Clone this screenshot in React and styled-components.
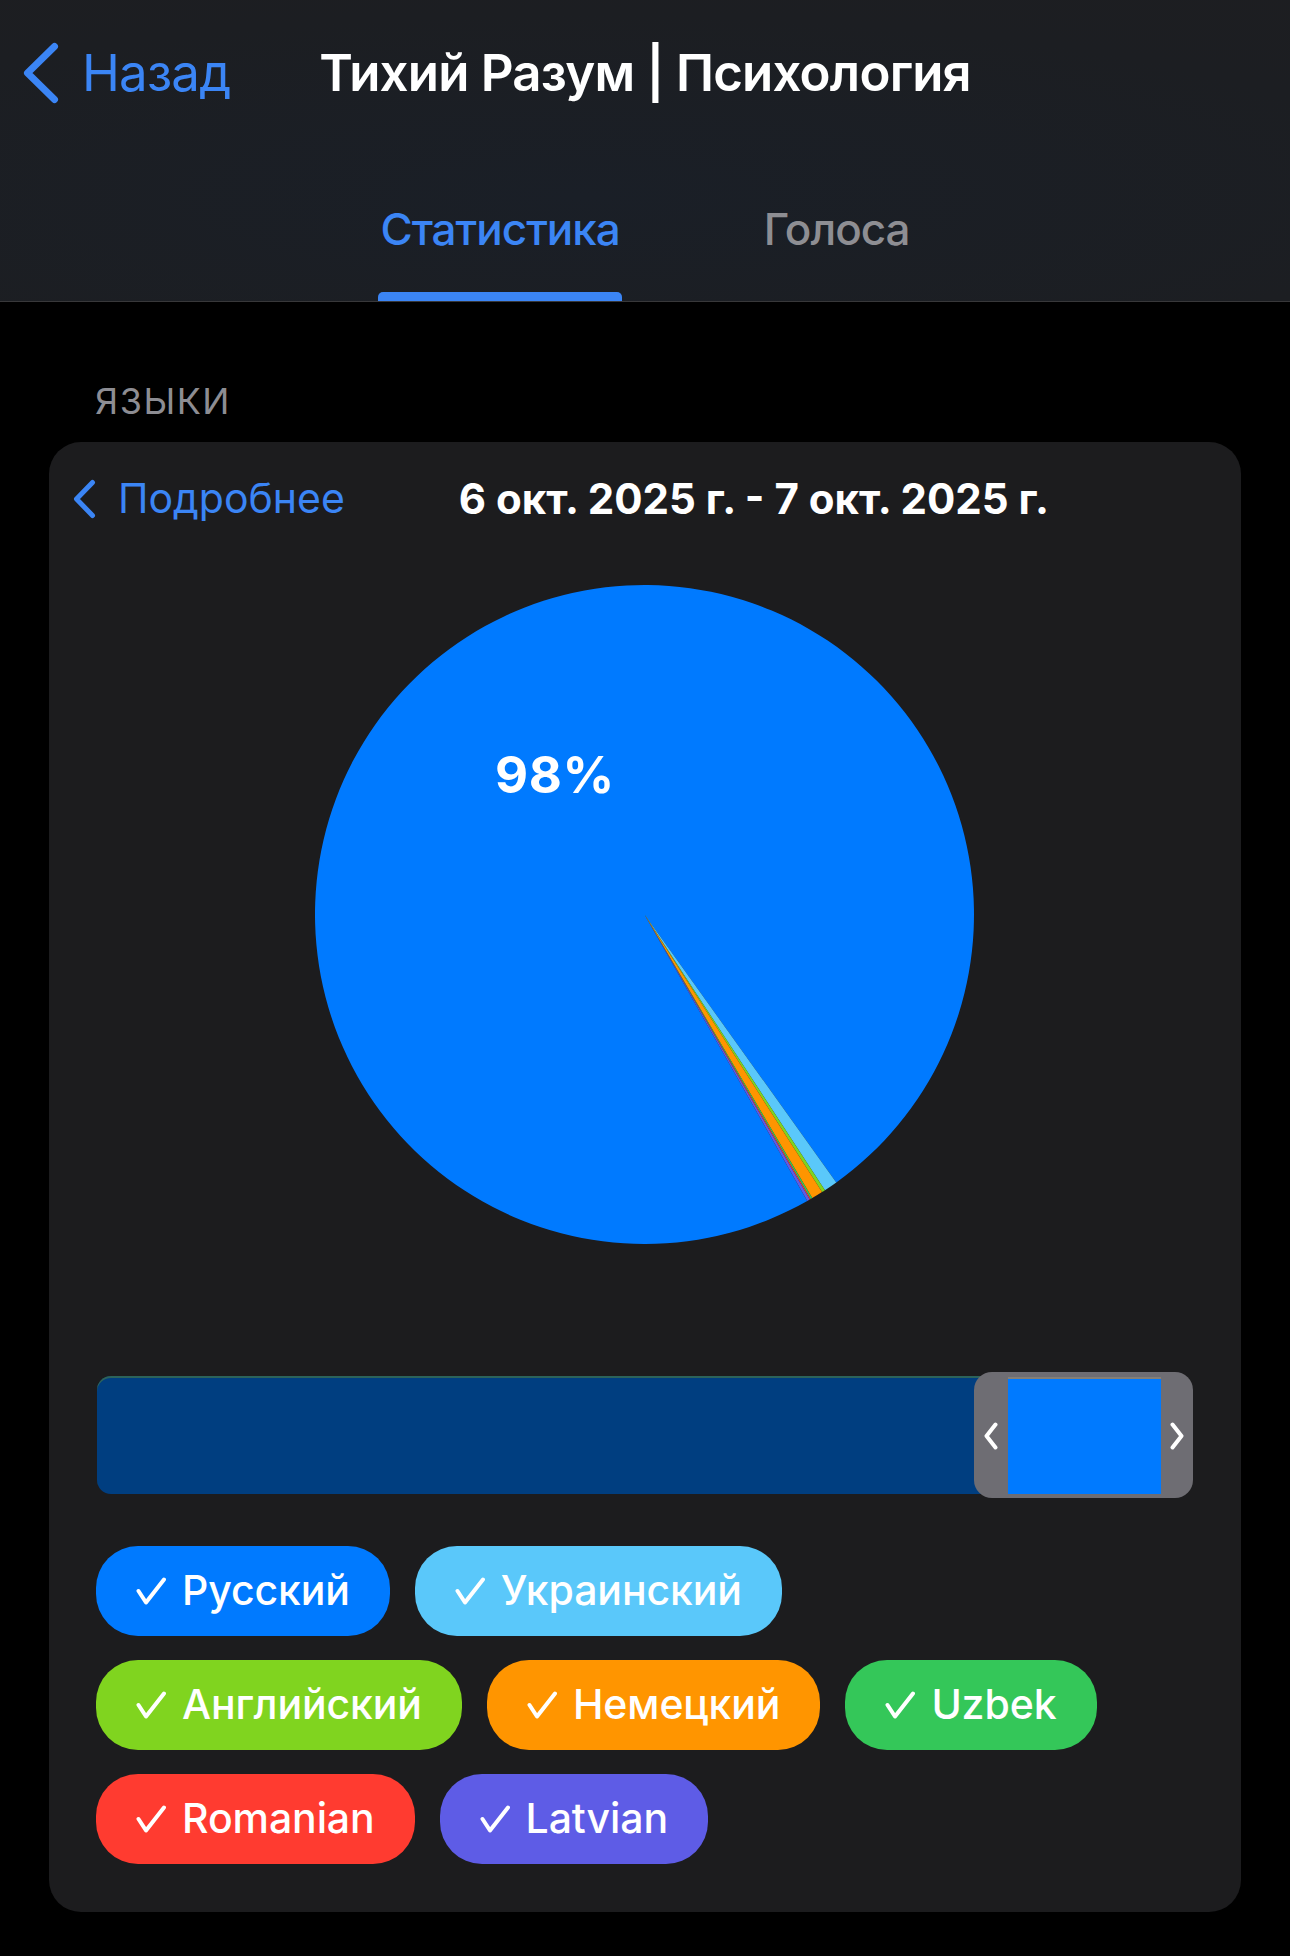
import React from "react";
import styled, { createGlobalStyle } from "styled-components";

const GlobalStyle = createGlobalStyle`
  html, body {
    margin: 0;
    padding: 0;
    background: #000;
  }
  body {
    font-family: Inter, "Noto Sans", "DejaVu Sans", sans-serif;
    color: #fff;
    -webkit-font-smoothing: antialiased;
  }
`;

const BLUE_LINK = "#3b85f5";

const Page = styled.div`
  width: 1290px;
  min-height: 1956px;
  background: #000;
`;

const Header = styled.header`
  height: 302px;
  box-sizing: border-box;
  border-bottom: 1px solid #38383a;
  background: radial-gradient(120% 110% at 45% 65%, #1a1f27 0%, #1c1e22 55%, #1e1e20 100%);
  display: flex;
  flex-direction: column;
`;

const NavBar = styled.div`
  height: 146px;
  display: grid;
  grid-template-columns: 1fr auto 1fr;
  align-items: center;
`;

const BackButton = styled.div`
  display: flex;
  align-items: center;
  gap: 23px;
  padding-left: 23px;
  color: ${BLUE_LINK};
  font-size: 51px;
  line-height: 1.21;
  letter-spacing: -0.8px;
`;

const Title = styled.h1`
  margin: 0;
  font-size: 51px;
  font-weight: 600;
  line-height: 1.21;
  letter-spacing: -0.8px;
  color: #fff;
`;

const Tabs = styled.nav`
  flex: 1;
  display: flex;
  justify-content: center;
  align-items: flex-end;
  gap: 140px;
`;

const Tab = styled.div`
  display: flex;
  flex-direction: column;
  align-items: stretch;
  color: ${({ $active }) => ($active ? BLUE_LINK : "#8e8e93")};
  font-size: 44px;
  font-weight: 500;
  line-height: 56px;
  letter-spacing: -1px;
  text-align: center;
`;

const TabLabel = styled.span`
  padding: 0 2px;
`;

const Indicator = styled.span`
  margin-top: 35px;
  height: 9px;
  border-radius: 5px 5px 0 0;
  background: ${({ $active }) => ($active ? BLUE_LINK : "transparent")};
`;

const Content = styled.main`
  padding: 0 49px;
`;

const SectionLabel = styled.div`
  margin-top: 77px;
  padding-left: 46px;
  font-size: 36px;
  line-height: 44px;
  color: #8d8d93;
  letter-spacing: 1.5px;
`;

const Card = styled.section`
  margin-top: 19px;
  background: #1c1c1e;
  border-radius: 32px;
  padding: 0 48px 48px 47px;
`;

const CardHeader = styled.div`
  height: 114px;
  margin-left: -23px;
  display: flex;
  align-items: center;
`;

const DetailsLink = styled.div`
  display: flex;
  align-items: center;
  gap: 22px;
  color: ${BLUE_LINK};
  font-size: 41px;
  line-height: 1.21;
`;

const DateRange = styled.div`
  margin-left: 114px;
  font-size: 42px;
  font-weight: 700;
  line-height: 1.21;
  white-space: nowrap;
`;

const ChartWrap = styled.div`
  margin-top: 29px;
  display: flex;
  justify-content: center;
`;

const Slider = styled.div`
  position: relative;
  margin-top: 128px;
  height: 126px;
`;

const Track = styled.div`
  position: relative;
  top: 4px;
  margin: 0 20px 0 1px;
  height: 118px;
  border-radius: 14px;
  background: #003e80;
  box-shadow: inset 0 2px 0 rgba(80, 130, 60, 0.55);
`;

const Handle = styled.div`
  position: absolute;
  top: 0;
  right: 0;
  width: 219px;
  height: 126px;
  box-sizing: border-box;
  padding: 5px 32px 4px 0;
  border-radius: 18px;
  background: #6e6d73;
  display: flex;
  align-items: stretch;
`;

const Grip = styled.div`
  width: 34px;
  display: flex;
  align-items: center;
  justify-content: center;
`;

const Window = styled.div`
  flex: 1;
  position: relative;
  background: #007aff;
  box-shadow: inset 0 2px 0 rgba(190, 130, 60, 0.7);
`;

const RightGrip = styled.div`
  position: absolute;
  top: 0;
  bottom: 0;
  right: -32px;
  width: 32px;
  display: flex;
  align-items: center;
  justify-content: center;
`;

const Chips = styled.div`
  margin-top: 48px;
  display: flex;
  flex-wrap: wrap;
  gap: 24px 25px;
  max-width: 1050px;
`;

const Chip = styled.div`
  height: 90px;
  box-sizing: border-box;
  padding: 0 40px;
  border-radius: 42px;
  background: ${({ $color }) => $color};
  display: flex;
  align-items: center;
  gap: 16px;
  color: #fff;
  font-size: 41px;
  font-weight: 500;
  line-height: 1.21;
  letter-spacing: -0.1px;
`;

const Chevron = ({ width, height, stroke }) => (
  <svg width={width} height={height} viewBox={`0 0 ${width} ${height}`} fill="none">
    <path
      d={`M${width - stroke / 2 - 1} ${stroke / 2 + 1} L${stroke / 2 + 1} ${height / 2} L${width - stroke / 2 - 1} ${height - stroke / 2 - 1}`}
      stroke={BLUE_LINK}
      strokeWidth={stroke}
      strokeLinecap="round"
      strokeLinejoin="round"
    />
  </svg>
);

const GripArrow = ({ flip }) => (
  <svg width="14" height="28" viewBox="0 0 14 28" fill="none">
    <path
      d={flip ? "M2.5 2.5 L11.5 14 L2.5 25.5" : "M11.5 2.5 L2.5 14 L11.5 25.5"}
      stroke="#fff"
      strokeWidth="4"
      strokeLinecap="round"
      strokeLinejoin="round"
    />
  </svg>
);

const Check = () => (
  <svg width="30" height="28" viewBox="0 0 30 28" fill="none">
    <path d="M2.5 14 L10 25.5 L28 2.5" stroke="#fff" strokeWidth="4" strokeLinecap="round" strokeLinejoin="round" />
  </svg>
);

const languages = [
  { name: "Русский", color: "#007aff", span: 354 },
  { name: "Украинский", color: "#5ac8fa", span: 2.4 },
  { name: "Английский", color: "#80d41f", span: 0.6 },
  { name: "Немецкий", color: "#ff9500", span: 2.0 },
  { name: "Uzbek", color: "#34c759", span: 0.3 },
  { name: "Romanian", color: "#ff3b30", span: 0.2 },
  { name: "Latvian", color: "#5e5ce6", span: 0.5 },
];

const R = 329.5;

const point = (deg) => {
  const a = (deg * Math.PI) / 180;
  return [R + R * Math.sin(a), R - R * Math.cos(a)];
};

const slicePath = (from, to) => {
  const [x1, y1] = point(from);
  const [x2, y2] = point(to);
  const large = to - from > 180 ? 1 : 0;
  return `M${R} ${R} L${x1} ${y1} A${R} ${R} 0 ${large} 1 ${x2} ${y2} Z`;
};

const PieChart = () => {
  // Russian starts just after Latvian and wraps round to the small slices
  let angle = 150.4;
  const slices = languages.map((l) => {
    const from = angle;
    angle += l.span;
    return { ...l, from, to: angle };
  });
  return (
    <svg width={R * 2} height={R * 2} viewBox={`0 0 ${R * 2} ${R * 2}`}>
      {slices.map((s) => (
        <path key={s.name} d={slicePath(s.from, s.to)} fill={s.color} />
      ))}
      <text
        x="240"
        y="208"
        textAnchor="middle"
        fill="#fff"
        fontSize="51"
        fontWeight="700"
        letterSpacing="0.6"
        fontFamily="Inter, 'Noto Sans', sans-serif"
      >
        98%
      </text>
    </svg>
  );
};

export default function App() {
  return (
    <Page>
      <GlobalStyle />
      <Header>
        <NavBar>
          <BackButton>
            <Chevron width={36} height={62} stroke={7} />
            Назад
          </BackButton>
          <Title>Тихий Разум | Психология</Title>
          <div />
        </NavBar>
        <Tabs>
          <Tab $active>
            <TabLabel>Статистика</TabLabel>
            <Indicator $active />
          </Tab>
          <Tab>
            <TabLabel>Голоса</TabLabel>
            <Indicator />
          </Tab>
        </Tabs>
      </Header>

      <Content>
        <SectionLabel>ЯЗЫКИ</SectionLabel>
        <Card>
          <CardHeader>
            <DetailsLink>
              <Chevron width={23} height={40} stroke={5} />
              Подробнее
            </DetailsLink>
            <DateRange>6 окт. 2025 г. - 7 окт. 2025 г.</DateRange>
          </CardHeader>

          <ChartWrap>
            <PieChart />
          </ChartWrap>

          <Slider>
            <Track />
            <Handle>
              <Grip>
                <GripArrow />
              </Grip>
              <Window>
                <RightGrip>
                  <GripArrow flip />
                </RightGrip>
              </Window>
            </Handle>
          </Slider>

          <Chips>
            {languages.map((l) => (
              <Chip key={l.name} $color={l.color}>
                <Check />
                {l.name}
              </Chip>
            ))}
          </Chips>
        </Card>
      </Content>
    </Page>
  );
}
